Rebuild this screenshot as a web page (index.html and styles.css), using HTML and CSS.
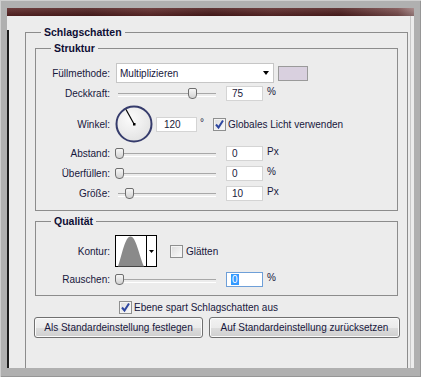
FILE: index.html
```html
<!DOCTYPE html>
<html lang="de">

<head>
  <meta charset="UTF-8" />
  <meta name="viewport" content="width=device-width, initial-scale=1.0" />
  <title>Ebenenstil - Schlagschatten</title>
  <link rel="stylesheet" href="styles.css">
</head>

<body>
  <div class="window">
    <!-- Titelleiste -->
    <div class="titlebar"></div>

    <div class="panel">
      <fieldset class="group outer">
        <legend>Schlagschatten</legend>

        <!-- Struktur -->
        <fieldset class="group">
          <legend>Struktur</legend>

          <div class="row row-select">
            <span class="lbl">Füllmethode:</span>
            <div class="select">
              <span>Multiplizieren</span>
              <i class="arrow"></i>
            </div>
            <span class="swatch"></span>
          </div>

          <div class="row gap3">
            <span class="lbl">Deckkraft:</span>
            <div class="slider"><span class="thumb" style="left: 73px"></span></div>
            <span class="field">75</span>
            <span class="unit">%</span>
          </div>

          <div class="row row-angle gap4">
            <span class="lbl">Winkel:</span>
            <svg class="dial" width="38" height="38" viewBox="0 0 38 38">
              <defs>
                <radialGradient id="dialFill" cx="0.4" cy="0.35" r="0.7">
                  <stop offset="0" stop-color="#fbfbfb" />
                  <stop offset="1" stop-color="#e2e2e2" />
                </radialGradient>
              </defs>
              <circle cx="19" cy="19" r="17.5" fill="url(#dialFill)" stroke="#363c6c" stroke-width="2" />
              <line x1="19" y1="19" x2="11" y2="4.5" stroke="#000" stroke-width="1.2" />
              <rect x="18" y="18" width="2.5" height="2.5" fill="#000" />
            </svg>
            <span class="field wide">120</span>
            <span class="deg">°</span>
            <span class="cb checked cb-angle">
              <svg width="11" height="11" viewBox="0 0 11 11"><path d="M2 5.5 L4.5 8.5 L9 1.5" fill="none" stroke="#2e47a0" stroke-width="2" /></svg>
            </span>
            <span class="cb-text">Globales Licht verwenden</span>
          </div>

          <div class="row gap3">
            <span class="lbl">Abstand:</span>
            <div class="slider"><span class="thumb" style="left: 0px"></span></div>
            <span class="field">0</span>
            <span class="unit">Px</span>
          </div>

          <div class="row gap5">
            <span class="lbl">Überfüllen:</span>
            <div class="slider"><span class="thumb" style="left: 0px"></span></div>
            <span class="field">0</span>
            <span class="unit">%</span>
          </div>

          <div class="row gap5">
            <span class="lbl">Größe:</span>
            <div class="slider"><span class="thumb" style="left: 10px"></span></div>
            <span class="field">10</span>
            <span class="unit">Px</span>
          </div>
        </fieldset>

        <!-- Qualität -->
        <fieldset class="group quality">
          <legend>Qualität</legend>

          <div class="row row-contour">
            <span class="lbl">Kontur:</span>
            <svg class="contour" width="42" height="32" viewBox="0 0 42 32">
              <rect x="0.5" y="0.5" width="41" height="31" fill="#fff" stroke="#000" />
              <path d="M3 31.5 C 7 20, 10 1.5, 15.5 1.5 C 21 1.5, 24 20, 29 31.5 Z" fill="#8a8a8a" />
              <line x1="31.5" y1="0" x2="31.5" y2="32" stroke="#000" />
              <path d="M34 15 h5 l-2.5 3 z" fill="#000" />
            </svg>
            <span class="cb cb-smooth"></span>
            <span class="cb-text smooth-text">Glätten</span>
          </div>

          <div class="row gap5">
            <span class="lbl">Rauschen:</span>
            <div class="slider"><span class="thumb" style="left: 0px"></span></div>
            <span class="field focus"><span class="sel">0</span></span>
            <span class="unit">%</span>
          </div>
        </fieldset>

        <div class="check-line">
          <span class="cb checked">
            <svg width="11" height="11" viewBox="0 0 11 11"><path d="M2 5.5 L4.5 8.5 L9 1.5" fill="none" stroke="#2e47a0" stroke-width="2" /></svg>
          </span>
          <span class="cb-text">Ebene spart Schlagschatten aus</span>
        </div>

        <div class="buttons">
          <button class="btn btn-set">Als Standardeinstellung festlegen</button>
          <button class="btn btn-reset">Auf Standardeinstellung zurücksetzen</button>
        </div>
      </fieldset>
    </div>
  </div>
</body>

</html>
```

FILE: styles.css
```css
* {
  margin: 0;
  padding: 0;
  box-sizing: border-box;
}

body {
  width: 421px;
  height: 377px;
  overflow: hidden;
  font: 10px "Liberation Sans", Arial, sans-serif;
  color: #17173c;
}

.window {
  width: 421px;
  height: 377px;
  padding: 8px 7px 9px 7px;
  display: flex;
  flex-direction: column;
  background: #b0b0b0;
  box-shadow: inset 1px 1px 0 #cfcfcf, inset -1px -1px 0 #969696;
}

.titlebar {
  height: 8px;
  background:
    linear-gradient(180deg, rgba(255, 255, 255, 0.12), rgba(0, 0, 0, 0.15)),
    linear-gradient(90deg, #5a2424 0%, #4c1c1c 20%, #5e2828 35%, #4a1a1a 50%, #5a2626 65%, #4e1e1e 82%, #7a4c4c 96%, #a08080 100%);
}

.panel {
  flex: 1;
  overflow: hidden;
  padding: 0 6px 0 18px;
  background: linear-gradient(#1c1c1c, #1c1c1c) 0 14px / 2px 100% no-repeat, #ececec;
  box-shadow: inset -3px 0 0 #ececec, inset -4px 0 0 #c9c9c9;
}

/* Gruppen */
.group {
  border: 1px solid #8c8c8c;
  padding: 9px 0 9px 0;
  min-inline-size: 0;
}

.group legend {
  font-weight: bold;
  font-size: 10.5px;
  line-height: 12px;
  padding: 0 3px;
  margin-left: 15px;
  color: #0e0e34;
}

.outer {
  margin-top: 10px;
  padding: 4px 9px 40px 9px;
}

.outer > legend {
  margin-left: 6px;
}

.quality {
  margin-top: 4px;
  padding: 8px 0 8px 0;
}

/* Zeilen */
.row {
  display: flex;
  align-items: center;
  height: 15px;
}

.gap3 {
  margin-top: 3px;
}

.gap4 {
  margin-top: 4px;
}

.gap5 {
  margin-top: 5px;
}

.lbl {
  flex: none;
  width: 74px;
  margin-right: 5px;
  text-align: right;
}

.row-select {
  height: 20px;
}

.select {
  width: 158px;
  height: 20px;
  margin-left: 1px;
  display: flex;
  align-items: center;
  justify-content: space-between;
  padding: 0 4px 0 3px;
  background: #fff;
  border: 1px solid #c6c6c6;
}

.select .arrow {
  width: 0;
  height: 0;
  border-left: 3.5px solid transparent;
  border-right: 3.5px solid transparent;
  border-top: 4px solid #000;
}

.swatch {
  width: 30px;
  height: 15px;
  margin-left: 4px;
  background: #d9d0df;
  border: 1px solid #9a9a9a;
}

/* Schieberegler */
.slider {
  position: relative;
  flex: none;
  width: 101px;
  height: 15px;
}

.slider::before {
  content: "";
  position: absolute;
  left: 3px;
  right: 0;
  top: 7px;
  height: 2px;
  border-top: 1px solid #a8a8a8;
  border-bottom: 1px solid #fff;
}

.thumb {
  position: absolute;
  top: 2px;
  width: 9px;
  height: 11px;
  border: 1px solid #6e6e6e;
  border-radius: 2px 2px 4px 4px;
  background: linear-gradient(#f6f6f6, #d2d2d2);
}

/* Zahlenfelder */
.field {
  flex: none;
  width: 37px;
  height: 15px;
  margin-left: 10px;
  padding-left: 5px;
  line-height: 13px;
  background: #fff;
  border: 1px solid #d4d4d4;
  color: #1a1a3a;
}

.field.wide {
  width: 41px;
  margin-left: 3px;
  padding-left: 7px;
}

.field.focus {
  border-color: #6e9fd8;
  padding-left: 4px;
}

.field .sel {
  display: inline-block;
  padding: 0 1px;
  line-height: 11px;
  background: #3399ff;
  color: #fff;
}

.unit {
  align-self: flex-start;
  margin-left: 4px;
  line-height: 12px;
}

.row-angle {
  height: 38px;
}

.dial {
  flex: none;
}

.deg {
  margin-left: 3px;
  margin-bottom: 4px;
}

/* Kontrollkästchen */
.cb {
  flex: none;
  width: 13px;
  height: 13px;
  display: flex;
  align-items: center;
  justify-content: center;
  border: 1px solid #8e8f8f;
  background: linear-gradient(135deg, #dcdcdc, #fbfbfb);
  box-shadow: inset 0 0 0 1px #f4f4f4;
}

.cb-angle {
  margin-left: 9px;
}

.cb-text {
  margin-left: 2px;
}

.row-contour {
  height: 32px;
}

.contour {
  flex: none;
}

.cb-smooth {
  margin-left: 13px;
}

.smooth-text {
  margin-left: 3px;
}

.check-line {
  display: flex;
  align-items: center;
  margin: 5px 0 0 84px;
  height: 13px;
}

/* Schaltflächen */
.buttons {
  display: flex;
  gap: 6px;
  margin: 3px -2px 0 -1px;
}

.btn {
  height: 21px;
  font: 10px "Liberation Sans", Arial, sans-serif;
  color: #17173c;
  border: 1px solid #707070;
  border-radius: 3px;
  background: linear-gradient(#f2f2f2 0%, #ebebeb 50%, #dddddd 51%, #cfcfcf 100%);
  box-shadow: inset 0 0 0 1px #fbfbfb;
}

.btn-set {
  width: 169px;
}

.btn-reset {
  flex: 1;
}
```
